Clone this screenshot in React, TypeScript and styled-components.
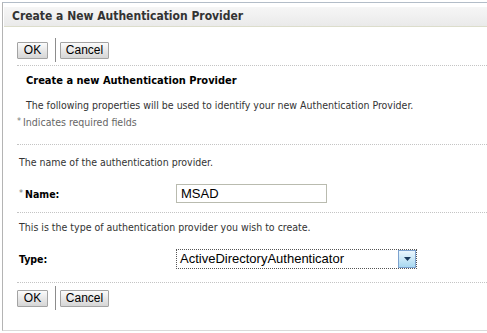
import styled, { createGlobalStyle } from 'styled-components';

const GlobalStyle = createGlobalStyle`
    html, body {
        margin: 0;
        padding: 0;
        background: #FFFFFF;
    }
`;

const Page = styled.div`
    width: 487px;
    height: 333px;
    box-sizing: border-box;
    padding: 2px 0 2px 2px;
    overflow: hidden;
    font-family: "DejaVu Sans Condensed", "DejaVu Sans", sans-serif;
    color: #333333;
`;

const Panel = styled.div`
    height: 100%;
    box-sizing: border-box;
    border-left: 1px solid #B4B4B4;
    border-top: 1px solid #B3BDC8;
    border-bottom: 1px solid #DADADA;
`;

const Header = styled.div`
    margin: 4px 0 0 1px;
    height: 19px;
    line-height: 19px;
    padding-left: 8px;
    background: linear-gradient(#F6F6F6, #EAEAEA);
    border-bottom: 1px solid #DCDDCB;
    font-size: 12px;
    font-weight: bold;
    color: #333333;
`;

const Content = styled.div`
    padding-left: 14px;
`;

const ButtonBar = styled.div<{ $top: number }>`
    display: flex;
    align-items: center;
    margin-top: ${(p) => p.$top}px;
    height: 24px;
`;

const Button = styled.button<{ $width: number }>`
    width: ${(p) => p.$width}px;
    height: 17px;
    padding: 0;
    border: 1px solid #A3A3A3;
    border-radius: 1px;
    background: linear-gradient(#FBFBFB, #E4E4E4 60%, #D6D6D6);
    font-family: "Liberation Sans", Arial, sans-serif;
    font-size: 12px;
    line-height: 15px;
    color: #000000;
`;

const Separator = styled.div`
    width: 1px;
    height: 24px;
    margin: 0 4px 0 7px;
    background: #8C8C8C;
`;

const Divider = styled.div<{ $top: number }>`
    margin-top: ${(p) => p.$top}px;
    border-top: 1px dotted #C4C4C4;
`;

const Title = styled.div`
    margin: 8px 0 0 9px;
    font-size: 11px;
    font-weight: bold;
    color: #000000;
`;

const Text = styled.div<{ $top: number; $indent?: number }>`
    margin-top: ${(p) => p.$top}px;
    margin-left: ${(p) => p.$indent ?? 2}px;
    font-size: 10.5px;
    color: #333333;
`;

const Hint = styled.div`
    margin-top: 5px;
    font-size: 10.5px;
    color: #666666;
`;

const Star = styled.span`
    color: #777777;
    font-size: 9px;
    font-weight: normal;
    vertical-align: 2px;
    margin-right: 2px;
`;

const Row = styled.div<{ $top: number }>`
    display: flex;
    align-items: center;
    margin: ${(p) => p.$top}px 0 0 2px;
`;

const Label = styled.div`
    width: 157px;
    font-size: 10.5px;
    font-weight: bold;
    color: #000000;
`;

const TextInput = styled.div`
    width: 151px;
    height: 19px;
    box-sizing: border-box;
    border: 1px solid #B9BBAF;
    padding-left: 4px;
    font-family: "Liberation Sans", Arial, sans-serif;
    font-size: 13px;
    line-height: 17px;
    color: #000000;
`;

const Select = styled.div`
    width: 241px;
    height: 20px;
    box-sizing: border-box;
    display: flex;
    border: 1px dotted #555555;
    font-family: "Liberation Sans", Arial, sans-serif;
    font-size: 13px;
    line-height: 18px;
    color: #000000;
`;

const SelectText = styled.div`
    flex: 1;
    padding-left: 3px;
`;

const Arrow = styled.div`
    width: 16px;
    display: flex;
    align-items: center;
    justify-content: center;
    border: 1px solid #7DA2CE;
    background: linear-gradient(#EAF6FD, #C4E5F6 60%, #A8D8F0);
`;

function App() {
    return (
        <>
            <GlobalStyle />
            <Page>
                <Panel>
                    <Header>Create a New Authentication Provider</Header>
                    <Content>
                        <ButtonBar $top={11}>
                            <Button $width={31}>OK</Button>
                            <Separator />
                            <Button $width={49}>Cancel</Button>
                        </ButtonBar>
                        <Divider $top={3} />
                        <Title>Create a new Authentication Provider</Title>
                        <Text $top={12} $indent={9}>The following properties will be used to identify your new Authentication Provider.</Text>
                        <Hint><Star>*</Star>Indicates required fields</Hint>

                        <Divider $top={16} />
                        <Text $top={11}>The name of the authentication provider.</Text>
                        <Row $top={16}>
                            <Label><Star>*</Star>Name:</Label>
                            <TextInput>MSAD</TextInput>
                        </Row>

                        <Divider $top={9} />
                        <Text $top={8}>This is the type of authentication provider you wish to create.</Text>
                        <Row $top={16}>
                            <Label>Type:</Label>
                            <Select>
                                <SelectText>ActiveDirectoryAuthenticator</SelectText>
                                <Arrow>
                                    <svg width="7" height="4" viewBox="0 0 7 4">
                                        <path d="M0 0 H7 L3.5 4 Z" fill="#1B3A5C" />
                                    </svg>
                                </Arrow>
                            </Select>
                        </Row>

                        <Divider $top={13} />
                        <ButtonBar $top={3}>
                            <Button $width={31}>OK</Button>
                            <Separator />
                            <Button $width={49}>Cancel</Button>
                        </ButtonBar>
                    </Content>
                </Panel>
            </Page>
        </>
    );
}

export default App;
